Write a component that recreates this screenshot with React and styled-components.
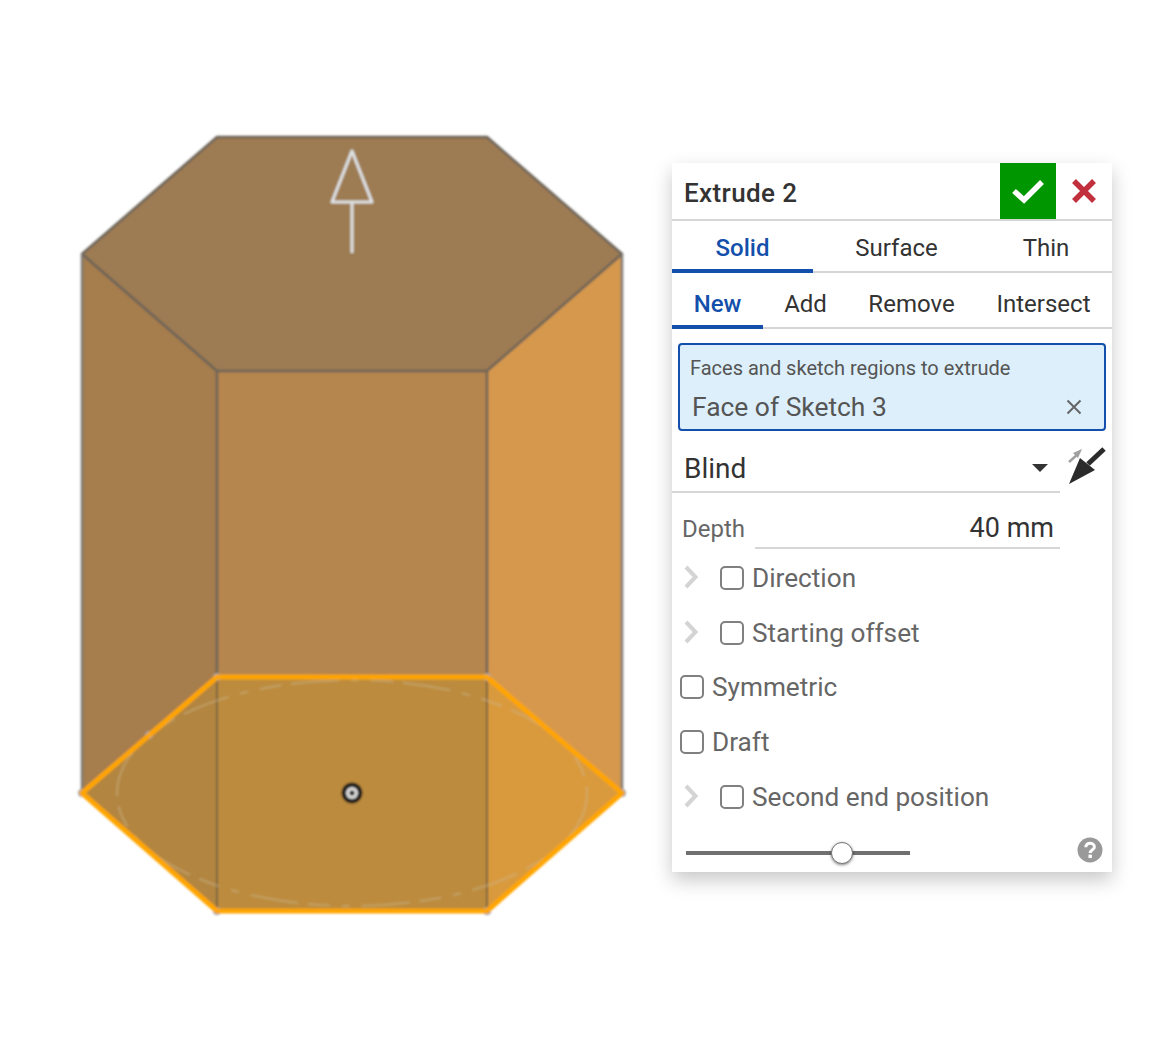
import styled, { createGlobalStyle } from "styled-components";

const GlobalStyle = createGlobalStyle`
  body {
    margin: 0;
    background: #fff;
    font-family: Roboto, "Liberation Sans", sans-serif;
  }
`;

const mainTabs = [
  { text: "Solid", width: 141, active: true },
  { text: "Surface", width: 167 },
  { text: "Thin", width: 132 },
];

const subTabs = [
  { text: "New", width: 91, active: true },
  { text: "Add", width: 85 },
  { text: "Remove", width: 127 },
  { text: "Intersect", width: 137 },
];

const options = [
  { text: "Direction", expandable: true },
  { text: "Starting offset", expandable: true },
  { text: "Symmetric" },
  { text: "Draft" },
  { text: "Second end position", expandable: true },
];

const vertices = [
  [82, 793],
  [622, 793],
  [217, 677],
  [487, 677],
  [217, 911],
  [487, 911],
  [149, 735],
];

function Model() {
  return (
    <ModelSvg width="672" height="1043" viewBox="0 0 672 1043">
      <defs>
        <filter id="soft" filterUnits="userSpaceOnUse" x="0" y="0" width="672" height="1043">
          <feGaussianBlur stdDeviation="0.8" />
        </filter>
      </defs>
      <g filter="url(#soft)">
        <polygon points="82,254 217,371 217,677 82,793" fill="#a67d4e" />
        <polygon points="217,371 487,371 487,677 217,677" fill="#b5864e" />
        <polygon points="487,371 622,254 622,793 487,677" fill="#d5984d" />
        <polygon points="217,137 487,137 622,254 487,371 217,371 82,254" fill="#9e7b52" />
        <polygon points="217,677 217,911 82,793" fill="#b2853f" />
        <polygon points="217,677 487,677 487,911 217,911" fill="#bc8b3e" />
        <polygon points="487,677 622,793 487,911" fill="#d99a3d" />
        <g fill="none" stroke="#6b6358" strokeWidth="2.5" strokeLinejoin="round">
          <polygon points="217,137 487,137 622,254 487,371 217,371 82,254" />
          <path d="M217 371V677M487 371V677" />
          <path d="M82 254V793M622 254V793" stroke="#7d7a74" />
          <path d="M217 677V911M487 677V911" stroke="#7a6340" strokeWidth="2" />
        </g>
        <ellipse
          cx="352"
          cy="793"
          rx="235"
          ry="113"
          fill="none"
          stroke="#cdbb95"
          strokeOpacity="0.38"
          strokeWidth="2.5"
          strokeDasharray="48 12 8 12 22 10"
        />
        {vertices.map(([x, y]) => (
          <circle key={x + "-" + y} cx={x} cy={y} r="4" fill="#a3a3a3" />
        ))}
        <polygon
          points="217,677 487,677 622,793 487,911 217,911 82,793"
          fill="none"
          stroke="#ffa500"
          strokeWidth="5"
          strokeLinejoin="round"
        />
        <path
          d="M352 253V202M332 202H372L352 151Z"
          fill="none"
          stroke="#dfe3e6"
          strokeWidth="3"
          strokeLinejoin="round"
        />
        <circle cx="352" cy="793" r="10.5" fill="#1c1c1c" />
        <circle cx="352" cy="793" r="6" fill="#ddd" />
        <circle cx="352" cy="793" r="2.5" fill="#111" />
      </g>
    </ModelSvg>
  );
}

function Chevron() {
  return (
    <svg width="16" height="26" viewBox="0 0 16 26">
      <path d="M3 2L12.5 12L3 22" fill="none" stroke="#d4d4d4" strokeWidth="4" />
    </svg>
  );
}

function FlipArrow() {
  return (
    <svg width="40" height="42" viewBox="0 0 40 42">
      <path d="M37 4L21 19" stroke="#2b2b2b" strokeWidth="5" />
      <polygon points="2,39 13,13 28,25" fill="#2b2b2b" />
      <path d="M2 17L11 9" stroke="#a0a0a0" strokeWidth="2.5" />
      <polygon points="15,4 6,8 11,13" fill="#a0a0a0" />
    </svg>
  );
}

export default function App() {
  return (
    <>
      <GlobalStyle />
      <Page>
        <Model />
        <Panel>
          <Header>
            <Title>Extrude 2</Title>
            <AcceptButton>
              <svg width="34" height="26" viewBox="0 0 34 26">
                <path d="M3 13L13 22L31 4" fill="none" stroke="#fff" strokeWidth="5.5" />
              </svg>
            </AcceptButton>
            <CancelButton>
              <svg width="26" height="26" viewBox="0 0 26 26">
                <path d="M3 3L23 23M23 3L3 23" fill="none" stroke="#c1303c" strokeWidth="5.5" />
              </svg>
            </CancelButton>
          </Header>

          <TabRow $height={52}>
            {mainTabs.map((tab) => (
              <Tab key={tab.text} $width={tab.width} $active={tab.active} $offset={6}>
                {tab.text}
              </Tab>
            ))}
          </TabRow>
          <TabRow $height={56}>
            {subTabs.map((tab) => (
              <Tab key={tab.text} $width={tab.width} $active={tab.active} $offset={10}>
                {tab.text}
              </Tab>
            ))}
          </TabRow>

          <SelectionBox>
            <SelectionLabel>Faces and sketch regions to extrude</SelectionLabel>
            <SelectionValue>
              Face of Sketch 3
              <svg width="16" height="16" viewBox="0 0 16 16">
                <path d="M1.5 1.5L14.5 14.5M14.5 1.5L1.5 14.5" stroke="#666" strokeWidth="2" />
              </svg>
            </SelectionValue>
          </SelectionBox>

          <EndRow>
            <Dropdown>
              Blind
              <Caret />
            </Dropdown>
            <FlipArrow />
          </EndRow>

          <DepthRow>
            <DepthLabel>Depth</DepthLabel>
            <DepthField>40 mm</DepthField>
          </DepthRow>

          <Options>
            {options.map((option) => (
              <OptionRow key={option.text}>
                {option.expandable && (
                  <ChevronSlot>
                    <Chevron />
                  </ChevronSlot>
                )}
                <Checkbox />
                {option.text}
              </OptionRow>
            ))}
          </Options>

          <Footer>
            <SliderTrack>
              <SliderThumb />
            </SliderTrack>
            <HelpIcon width="26" height="26" viewBox="0 0 26 26">
              <circle cx="13" cy="13" r="12.5" fill="#999" />
              <path d="M8.8 10.2C8.8 4.8 17.4 5 17.4 10C17.4 12.8 13.2 12.8 13.2 16" fill="none" stroke="#fff" strokeWidth="3" />
              <rect x="11.5" y="17.6" width="3.4" height="3.4" fill="#fff" />
            </HelpIcon>
          </Footer>
        </Panel>
      </Page>
    </>
  );
}

const Page = styled.div`
  width: 1153px;
  height: 1043px;
  display: flex;
  align-items: flex-start;
  overflow: hidden;
`;

const ModelSvg = styled.svg`
  flex: none;
  display: block;
`;

const Panel = styled.div`
  flex: none;
  width: 440px;
  height: 709px;
  margin-top: 163px;
  background: #fff;
  box-shadow: 0 8px 18px rgba(0, 0, 0, 0.22);
  display: flex;
  flex-direction: column;
`;

const Header = styled.div`
  height: 56px;
  display: flex;
  align-items: center;
  border-bottom: 2px solid #d6d6d6;
`;

const Title = styled.div`
  flex: 1;
  padding: 4px 0 0 12px;
  font-size: 26px;
  font-weight: 500;
  letter-spacing: 0.4px;
  color: #333;
`;

const AcceptButton = styled.div`
  width: 56px;
  height: 56px;
  background: #009600;
  display: flex;
  align-items: center;
  justify-content: center;
`;

const CancelButton = styled.div`
  width: 56px;
  height: 56px;
  display: flex;
  align-items: center;
  justify-content: center;
`;

const TabRow = styled.div`
  height: ${(props) => props.$height}px;
  box-sizing: border-box;
  display: flex;
  border-bottom: 2px solid #d6d6d6;
`;

const Tab = styled.div`
  width: ${(props) => props.$width}px;
  box-sizing: border-box;
  margin-bottom: -2px;
  padding-top: ${(props) => props.$offset}px;
  display: flex;
  align-items: center;
  justify-content: center;
  font-size: 24px;
  font-weight: ${(props) => (props.$active ? 500 : 400)};
  color: ${(props) => (props.$active ? "#1450ab" : "#333")};
  border-bottom: 4px solid ${(props) => (props.$active ? "#1450ab" : "transparent")};
`;

const SelectionBox = styled.div`
  height: 88px;
  box-sizing: border-box;
  margin: 14px 6px 0;
  padding: 10px 22px 0 10px;
  background: #dceffa;
  border: 2px solid #1450ab;
  border-radius: 4px;
`;

const SelectionLabel = styled.div`
  font-size: 20px;
  line-height: 26px;
  color: #555;
`;

const SelectionValue = styled.div`
  margin-top: 10px;
  padding-left: 2px;
  display: flex;
  align-items: center;
  justify-content: space-between;
  font-size: 26.4px;
  line-height: 32px;
  color: #555;
`;

const EndRow = styled.div`
  height: 48px;
  margin-top: 14px;
  display: flex;
  align-items: flex-start;
  gap: 7px;
`;

const Dropdown = styled.div`
  width: 388px;
  height: 48px;
  box-sizing: border-box;
  padding: 0 12px;
  display: flex;
  align-items: center;
  justify-content: space-between;
  font-size: 28px;
  color: #333;
  border-bottom: 2px solid #d6d6d6;
`;

const Caret = styled.div`
  width: 0;
  height: 0;
  border-left: 8px solid transparent;
  border-right: 8px solid transparent;
  border-top: 8px solid #333;
`;

const DepthRow = styled.div`
  width: 388px;
  height: 56px;
  display: flex;
  align-items: flex-end;
`;

const DepthLabel = styled.div`
  width: 83px;
  box-sizing: border-box;
  padding: 0 0 6px 10px;
  font-size: 24px;
  color: #666;
`;

const DepthField = styled.div`
  flex: 1;
  box-sizing: border-box;
  padding: 0 6px 3px 0;
  text-align: right;
  font-size: 27px;
  color: #333;
  border-bottom: 2px solid #d6d6d6;
`;

const Options = styled.div`
  margin-top: 1.6px;
  padding-left: 8px;
  display: flex;
  flex-direction: column;
`;

const OptionRow = styled.div`
  height: 54.75px;
  display: flex;
  align-items: center;
  gap: 8px;
  font-size: 26.2px;
  color: #666;
`;

const ChevronSlot = styled.div`
  width: 40px;
  margin-right: -8px;
  padding-left: 3px;
  box-sizing: border-box;
  display: flex;
  align-items: center;
`;

const Checkbox = styled.div`
  width: 24px;
  height: 24px;
  box-sizing: border-box;
  border: 2px solid #808080;
  border-radius: 5px;
`;

const Footer = styled.div`
  margin-top: auto;
  height: 46px;
  padding: 0 9px 0 14px;
  display: flex;
  justify-content: space-between;
  align-items: flex-start;
`;

const SliderTrack = styled.div`
  position: relative;
  width: 224px;
  height: 4px;
  margin-top: 25px;
  background: #707070;
`;

const SliderThumb = styled.div`
  position: absolute;
  left: 145px;
  top: -9px;
  width: 22px;
  height: 22px;
  box-sizing: border-box;
  background: #fff;
  border: 1px solid #777;
  border-radius: 50%;
  box-shadow: 0 1px 3px rgba(0, 0, 0, 0.5);
`;

const HelpIcon = styled.svg`
  margin-top: 11px;
`;
